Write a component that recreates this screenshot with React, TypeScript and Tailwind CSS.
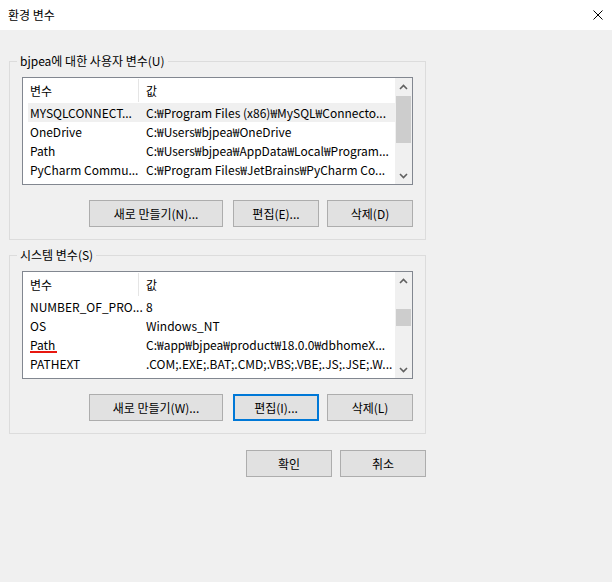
import React from "react";

type Row = [string, string];

const userVars: Row[] = [
  ["MYSQLCONNECT...", "C:₩Program Files (x86)₩MySQL₩Connecto..."],
  ["OneDrive", "C:₩Users₩bjpea₩OneDrive"],
  ["Path", "C:₩Users₩bjpea₩AppData₩Local₩Program..."],
  ["PyCharm Commu...", "C:₩Program Files₩JetBrains₩PyCharm Co..."],
];

const sysVars: Row[] = [
  ["NUMBER_OF_PRO...", "8"],
  ["OS", "Windows_NT"],
  ["Path", "C:₩app₩bjpea₩product₩18.0.0₩dbhomeX..."],
  ["PATHEXT", ".COM;.EXE;.BAT;.CMD;.VBS;.VBE;.JS;.JSE;.W..."],
];

const Chevron = ({ down }: { down?: boolean }) => (
  <svg width="9" height="6" viewBox="0 0 9 6" className={down ? "rotate-180" : ""}>
    <path d="M1 5 L4.5 1.5 L8 5" fill="none" stroke="#606060" strokeWidth="1.6" />
  </svg>
);

const VarList = ({
  rows,
  selected,
  thumb,
  marked,
}: {
  rows: Row[];
  selected?: number;
  thumb: "top" | "mid";
  marked?: number;
}) => {
  return (
    <div className="w-[391px] h-[108px] border border-[#828790] bg-white flex overflow-hidden">
      <div className="flex-1 flex flex-col">
        <div className="h-[25px] flex items-center pl-[5px] shrink-0">
          <div className="w-[111px] pl-[2px] relative h-full flex items-center">
            변수
            <span className="absolute right-0 top-[1px] bottom-[1px] w-px bg-[#e5e5e5]" />
          </div>
          <div className="pl-[7px]">값</div>
        </div>
        <div className="pl-[5px]">
          {rows.map(([name, value], i) => (
            <div
              key={name + i}
              className={`h-[19px] flex items-center whitespace-nowrap overflow-hidden ${
                i === selected ? "bg-[#f0f0f0]" : ""
              }`}
            >
              <div className="w-[118px] pl-[2px] shrink-0 overflow-hidden">
                {i === marked ? (
                  <span className="relative">
                    {name}
                    <span className="absolute left-0 top-[15px] w-[27px] h-[2px] bg-[#e8170f]" />
                  </span>
                ) : (
                  name
                )}
              </div>
              <div className="flex-1 overflow-hidden">{value}</div>
            </div>
          ))}
        </div>
      </div>
      <div className="w-[17px] bg-[#f0f0f0] flex flex-col items-center shrink-0">
        <div className="h-[17px] flex items-center justify-center">
          <Chevron />
        </div>
        {thumb === "top" ? (
          <div className="mt-[1px] w-[15px] h-[47px] bg-[#cdcdcd]" />
        ) : (
          <div className="mt-[20px] w-[15px] h-[17px] bg-[#cdcdcd]" />
        )}
        <div className="flex-1" />
        <div className="h-[17px] flex items-center justify-center">
          <Chevron down />
        </div>
      </div>
    </div>
  );
};

const Button = ({
  children,
  className = "",
  focused,
}: {
  children: React.ReactNode;
  className?: string;
  focused?: boolean;
}) => (
  <button
    className={`h-[27px] bg-[#e1e1e1] flex items-center justify-center ${
      focused ? "border-2 border-[#0078d7]" : "border border-[#adadad]"
    } ${className}`}
  >
    {children}
  </button>
);

const Group = ({ title, children }: { title: string; children: React.ReactNode }) => (
  <fieldset className="w-[417px] border border-[#dcdcdc] px-[12px] pt-[8px] pb-[12px]">
    <legend className="ml-[-5px] px-[3px] leading-[16px]">{title}</legend>
    {children}
  </fieldset>
);

export default function App() {
  return (
    <div className="w-[612px] h-[582px] bg-[#f0f0f0] text-[12px] leading-[16px] text-black font-['Noto_Sans_CJK_KR','Noto_Sans',sans-serif]">
      <div className="h-[30px] bg-white flex items-center justify-between pl-[8px] pr-[9px]">
        <span>환경 변수</span>
        <svg width="10" height="10" viewBox="0 0 10 10">
          <path d="M0.5 0.5 L9.5 9.5 M9.5 0.5 L0.5 9.5" stroke="#000" strokeWidth="1" />
        </svg>
      </div>
      <div className="pl-[9px] pt-[23px]">
        <Group title="bjpea에 대한 사용자 변수(U)">
          <VarList rows={userVars} selected={0} thumb="top" />
          <div className="mt-[15px] flex justify-end">
            <Button className="w-[134px] mr-[10px]">새로 만들기(N)...</Button>
            <Button className="w-[86px] mr-[8px]">편집(E)...</Button>
            <Button className="w-[86px]">삭제(D)</Button>
          </div>
        </Group>
        <div className="mt-[7px]">
          <Group title="시스템 변수(S)">
            <VarList rows={sysVars} thumb="mid" marked={2} />
            <div className="mt-[15px] flex justify-end">
              <Button className="w-[134px] mr-[10px]">새로 만들기(W)...</Button>
              <Button className="w-[86px] mr-[8px]" focused>
                편집(I)...
              </Button>
              <Button className="w-[86px]">삭제(L)</Button>
            </div>
          </Group>
        </div>
        <div className="w-[417px] mt-[16px] flex justify-end">
          <Button className="w-[86px] mr-[8px]">확인</Button>
          <Button className="w-[86px]">취소</Button>
        </div>
      </div>
    </div>
  );
}
